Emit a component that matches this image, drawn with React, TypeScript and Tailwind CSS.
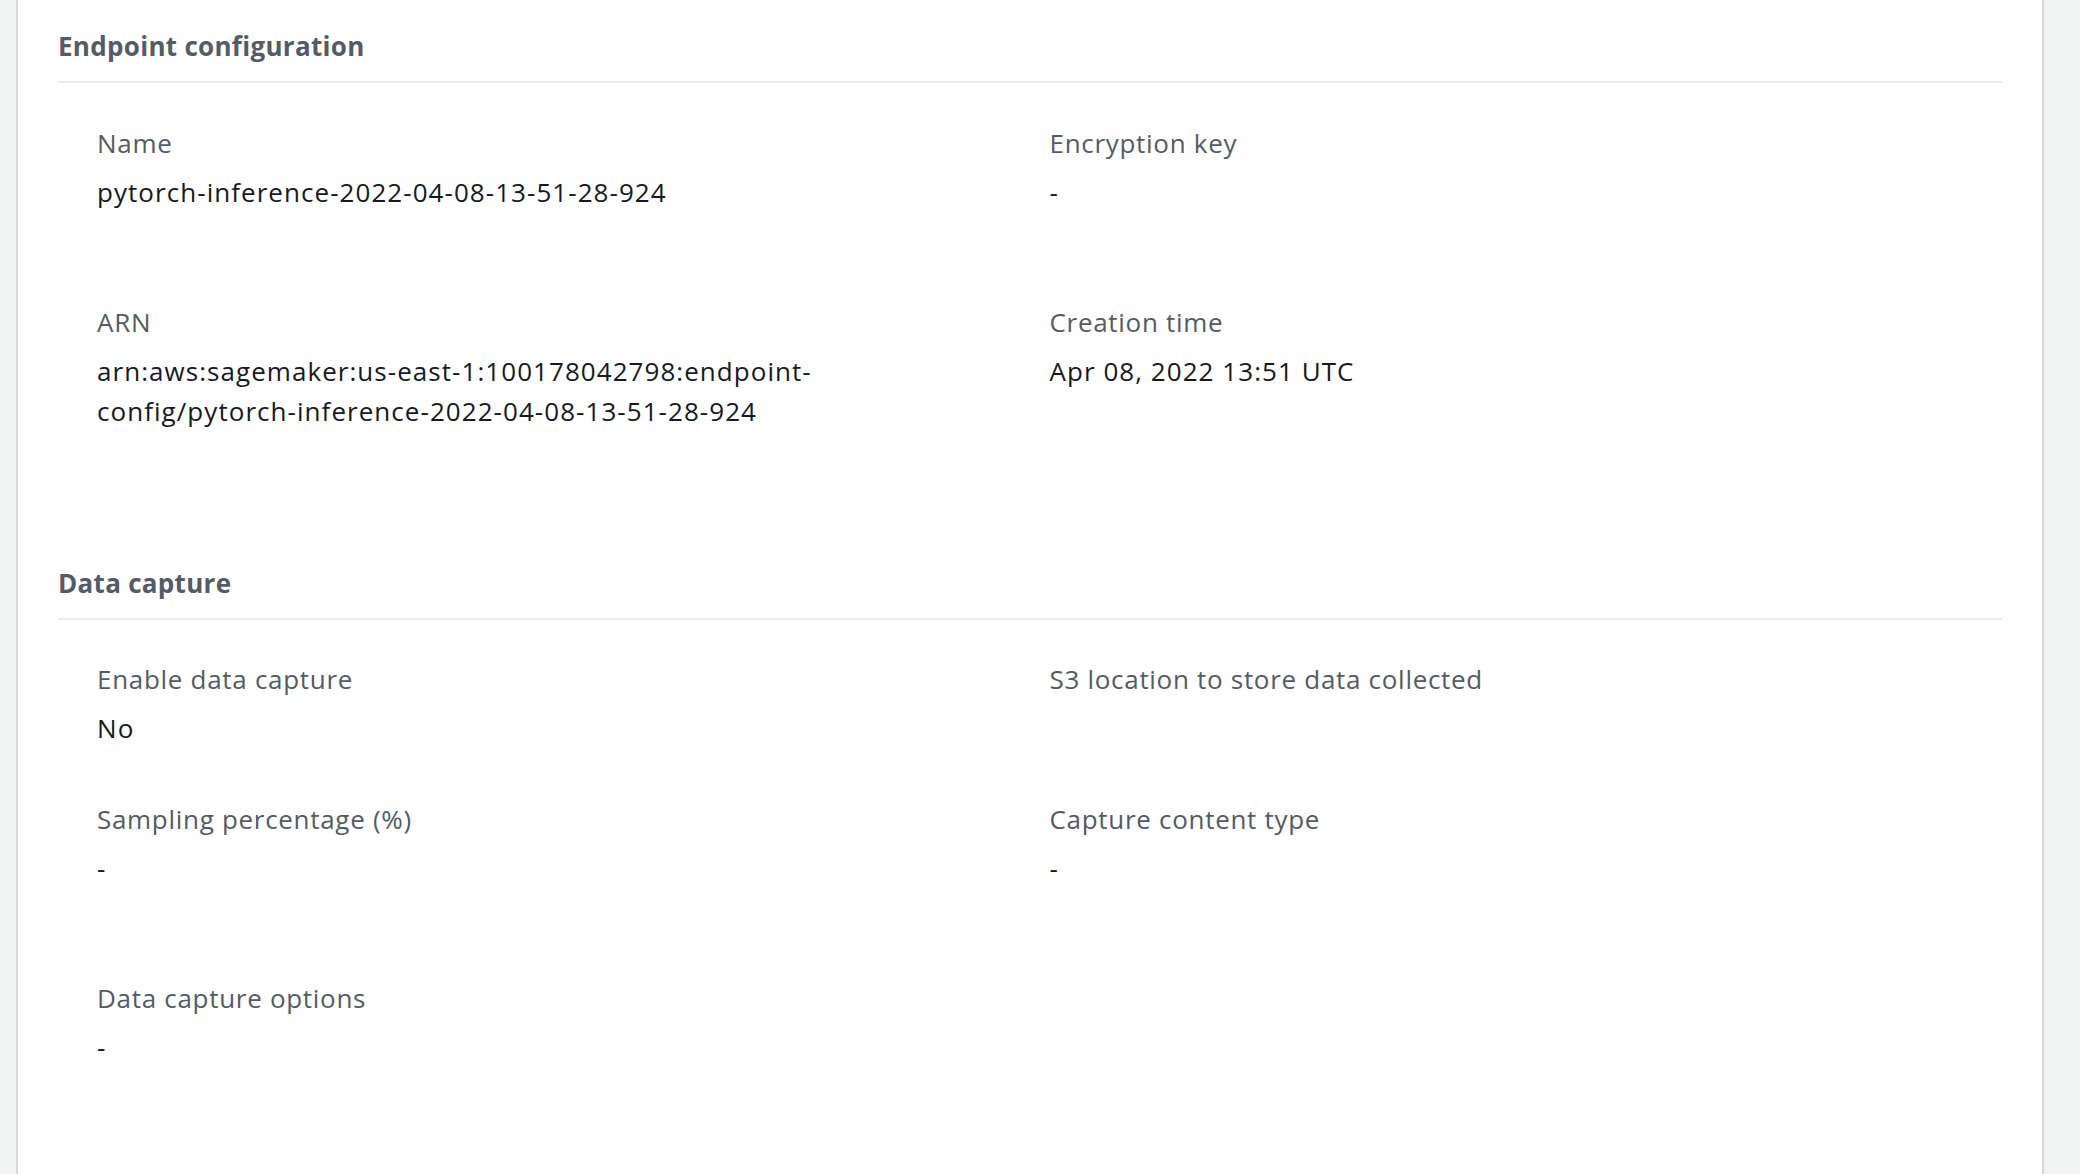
import React from "react"

type Field = { label: string; value?: React.ReactNode }
type Row = { space: string; fields: Field[] }

const sections: { title: string; space: string; rows: Row[] }[] = [
  {
    title: "Endpoint configuration",
    space: "mt-0",
    rows: [
      {
        space: "mt-[40px]",
        fields: [
          { label: "Name", value: "pytorch-inference-2022-04-08-13-51-28-924" },
          { label: "Encryption key", value: "-" },
        ],
      },
      {
        space: "mt-[90px]",
        fields: [
          {
            label: "ARN",
            value: (
              <>
                arn:aws:sagemaker:us-east-1:100178042798:endpoint-
                <br />
                config/pytorch-inference-2022-04-08-13-51-28-924
              </>
            ),
          },
          { label: "Creation time", value: "Apr 08, 2022 13:51 UTC" },
        ],
      },
    ],
  },
  {
    title: "Data capture",
    space: "mt-[132px]",
    rows: [
      {
        space: "mt-[39px]",
        fields: [
          { label: "Enable data capture", value: "No" },
          { label: "S3 location to store data collected" },
        ],
      },
      {
        space: "mt-[51px]",
        fields: [
          { label: "Sampling percentage (%)", value: "-" },
          { label: "Capture content type", value: "-" },
        ],
      },
      {
        space: "mt-[90px]",
        fields: [{ label: "Data capture options", value: "-" }],
      },
    ],
  },
]

const KeyValue = ({ label, value }: Field) => (
  <div className="flex flex-col">
    <span className="text-[#545b64] tracking-[0.7px]">{label}</span>
    {value !== undefined && (
      <span className="mt-[9px] text-[#16191f] tracking-[1.05px]">{value}</span>
    )}
  </div>
)

export default function App() {
  return (
    <div className="min-h-screen bg-[#f2f3f3] pl-[16px] pr-[36px] font-['Open_Sans',sans-serif] text-[26px] leading-[40px]">
      <div className="min-h-screen bg-white border-x-2 border-[#d5d9d9] px-[40px] pt-[26px]">
        {sections.map((section) => (
          <section key={section.title} className={section.space}>
            <h2 className="font-bold text-[#545b64] text-[26px] leading-[40px] tracking-[0.3px]">
              {section.title}
            </h2>
            <div className="mt-[15px] h-[2px] bg-[#eaeded]" />

            {/* key/value pairs, two per row */}
            <div className="pl-[39px]">
              {section.rows.map((row, i) => (
                <div key={i} className={`grid grid-cols-2 ${row.space}`}>
                  {row.fields.map((f) => (
                    <KeyValue key={f.label} {...f} />
                  ))}
                </div>
              ))}
            </div>
          </section>
        ))}
      </div>
    </div>
  )
}
